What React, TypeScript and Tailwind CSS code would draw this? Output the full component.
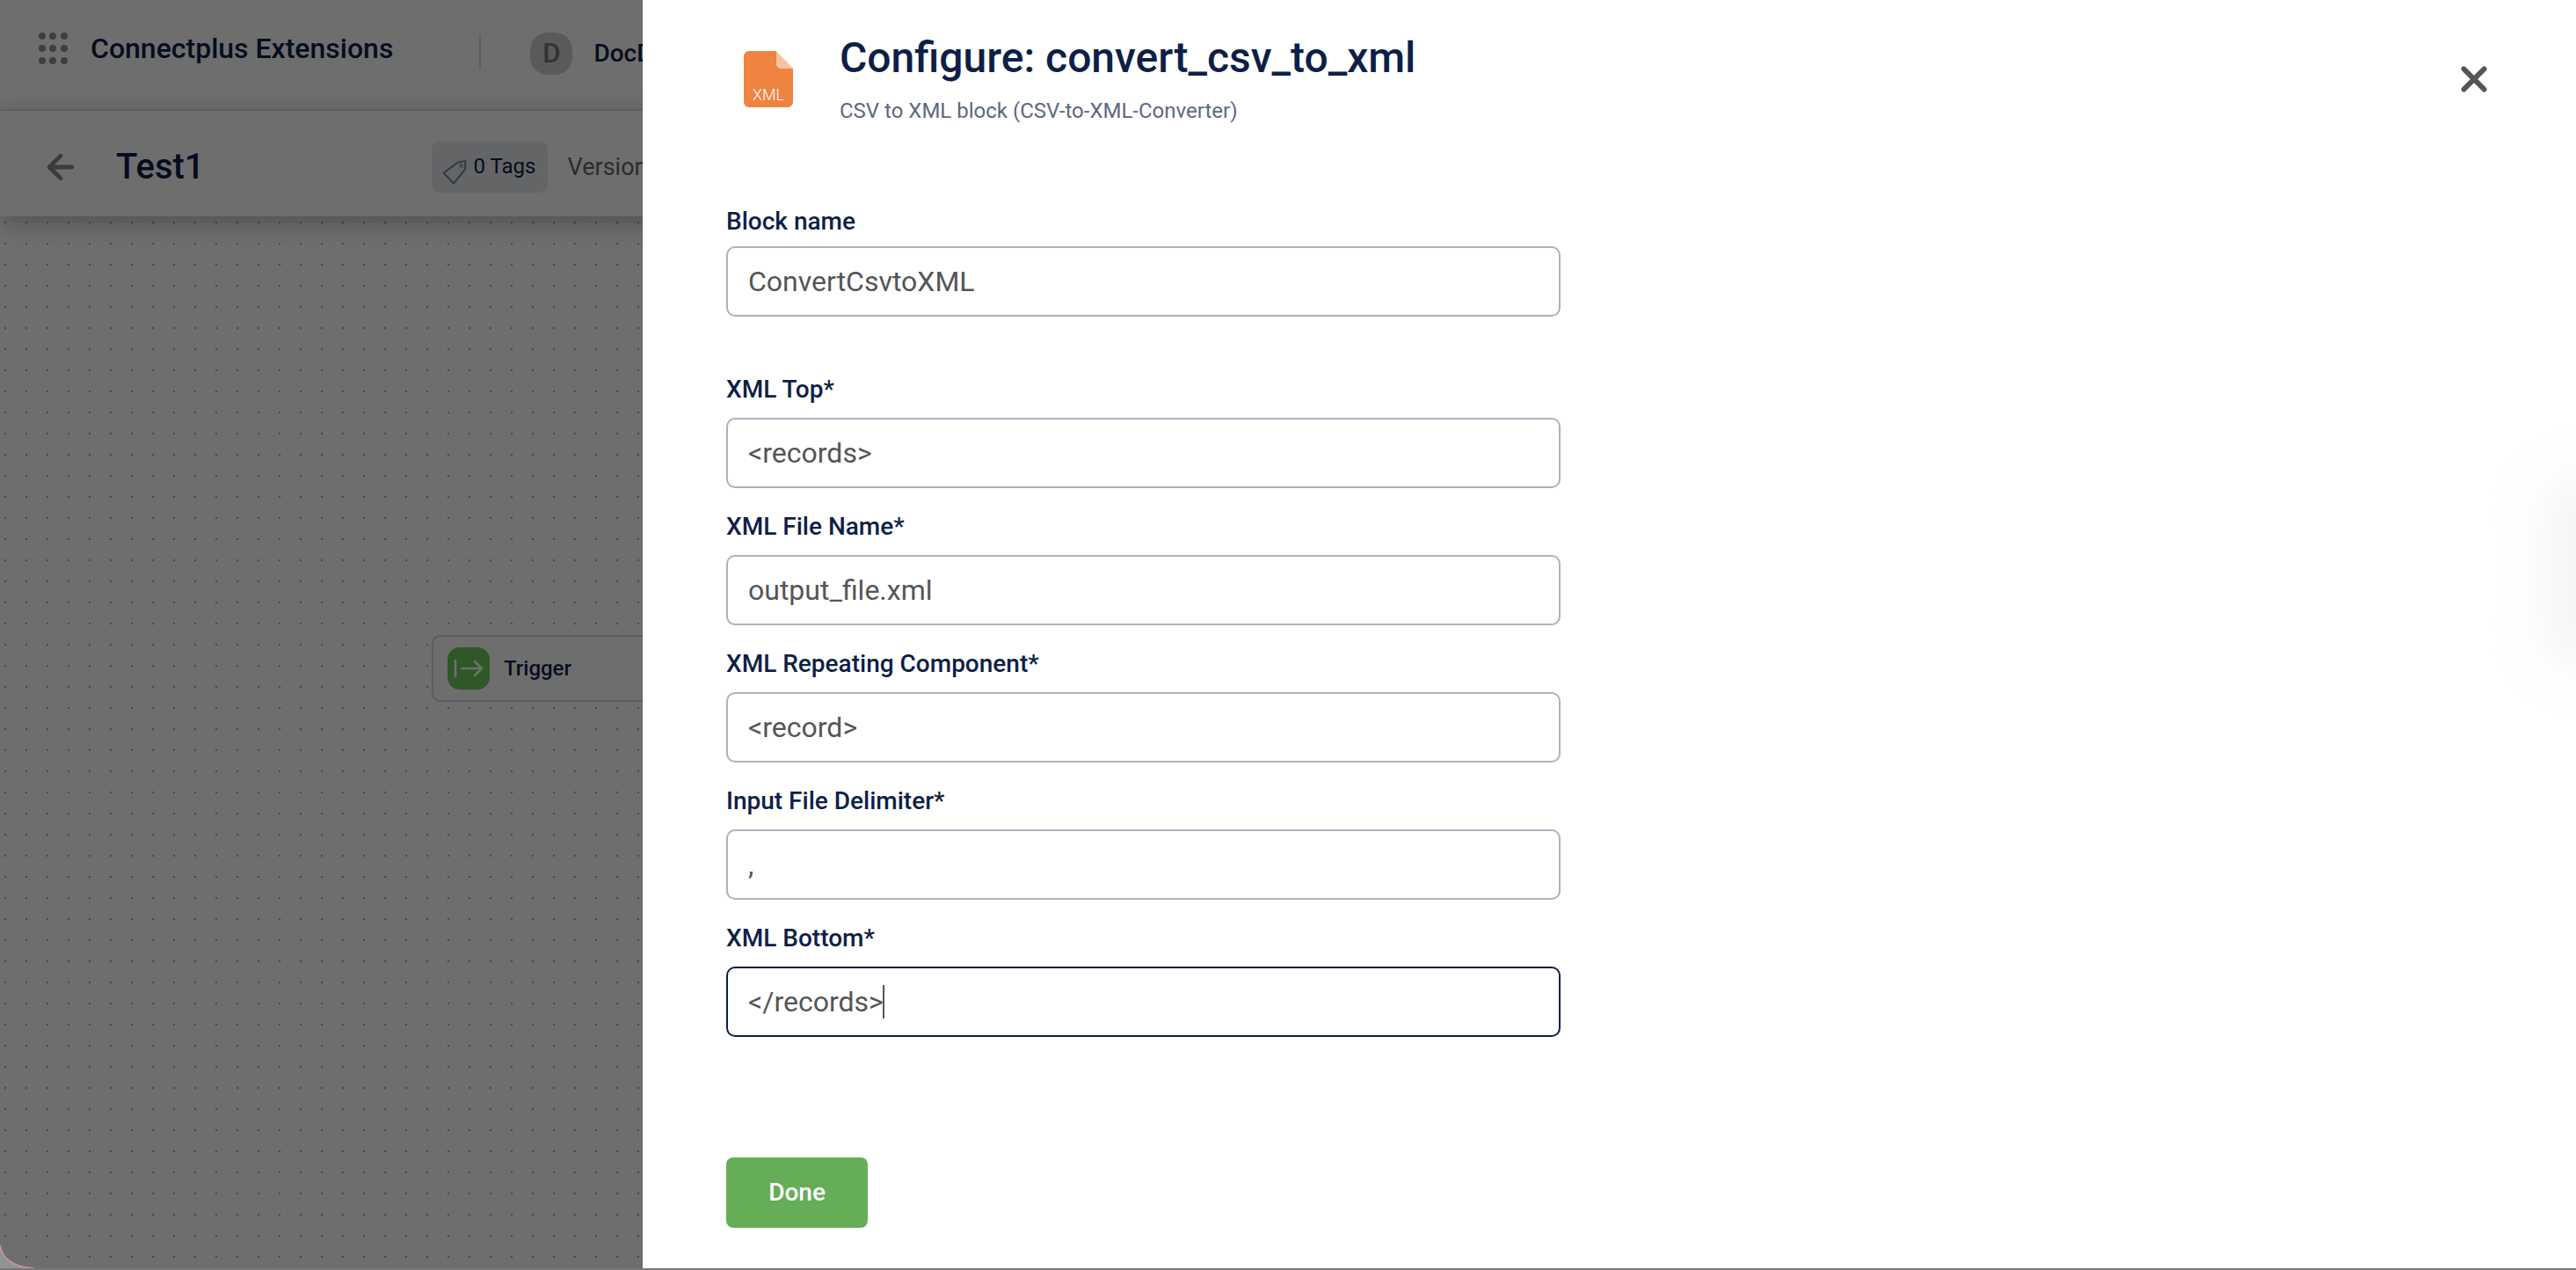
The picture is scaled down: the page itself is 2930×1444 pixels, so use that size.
import { ArrowLeft, X } from "lucide-react";

const FONT = "font-['Roboto',sans-serif]";

const FIELDS = [
  { label: "XML Top*", value: "<records>" },
  { label: "XML File Name*", value: "output_file.xml" },
  { label: "XML Repeating Component*", value: "<record>" },
  { label: "Input File Delimiter*", value: "," },
];

const LABEL = "h-[32px] text-[28px] leading-[32px] font-[550] text-[#0e1f47]";
const INPUT =
  "block h-[80px] w-[949px] rounded-[10px] border-2 bg-white px-[23px] text-[32px] text-[#555] outline-none";

function AppGrid() {
  return (
    <div className="grid h-[36px] w-[37px] grid-cols-3 content-between justify-between">
      {Array.from({ length: 9 }).map((_, i) => (
        <span key={i} className="h-[8px] w-[8px] rounded-full bg-[#8f8f8f]" />
      ))}
    </div>
  );
}

function TagIcon() {
  return (
    <svg width="28" height="28" viewBox="0 0 28 28" fill="none" className="mt-[11px]">
      <path
        d="M18 2.5 26.5 1 26 10.5 13 26.5 1.5 14.5Z"
        stroke="#7f8792"
        strokeWidth="2"
        strokeLinejoin="round"
      />
      <circle cx="21.5" cy="6.5" r="1.6" stroke="#7f8792" strokeWidth="1.3" />
    </svg>
  );
}

function XmlFileIcon() {
  return (
    <svg width="56" height="64" viewBox="0 0 56 64" className="ml-[20px] mt-[58px] shrink-0">
      <path
        d="M6 0H37V14a6 6 0 0 0 6 6H56V58a6 6 0 0 1-6 6H6a6 6 0 0 1-6-6V6a6 6 0 0 1 6-6Z"
        fill="#ee843f"
      />
      <path d="M37 0 56 20H43a6 6 0 0 1-6-6Z" fill="#f7c3a0" />
      <text x="28" y="56" textAnchor="middle" fontSize="18" fontWeight="300" fill="#fff" fontFamily="Roboto, sans-serif">
        XML
      </text>
    </svg>
  );
}

function Field({ label, value }: { label: string; value: string }) {
  return (
    <div className="mb-[28px]">
      <div className={`mb-[16px] ${LABEL}`}>{label}</div>
      <input readOnly value={value} className={`${INPUT} border-[#adb1bf]`} />
    </div>
  );
}

function BackgroundPage() {
  return (
    <div className="flex h-full flex-col bg-white">
      <header className="flex h-[126px] shrink-0 items-start border-b-2 border-[#ededed] pl-[44px] pt-[37px]">
        <AppGrid />
        <span className="ml-[22px] text-[32px] leading-[36px] font-medium text-[#0e1f47]">Connectplus Extensions</span>
        <span className="ml-[98px] mt-[2px] h-[40px] w-[2px] bg-[#d9d9d9]" />
        <span className="ml-[56px] flex h-[48px] w-[48px] items-center justify-center rounded-[20px] bg-[#d1d1d1] text-[31px] font-medium text-[#777]">
          D
        </span>
        <span className="ml-[24px] mt-[6px] text-[28px] leading-[36px] font-medium text-[#0e1f47]">DocD</span>
      </header>
      <div className="relative z-10 flex h-[120px] shrink-0 items-center bg-white pl-[47px] pt-[8px] shadow-[0_6px_28px_rgba(0,0,0,0.3)]">
        <ArrowLeft size={44} strokeWidth={2.6} className="text-[#8a8a8a]" />
        <span className="ml-[41px] text-[40px] leading-[48px] font-medium text-[#0e1f47]">Test1</span>
        <div className="ml-[258px] flex h-[58px] w-[132px] items-start rounded-[8px] bg-[#e8eaed] pl-[12px] pt-[10px]">
          <TagIcon />
          <span className="ml-[8px] text-[24px] leading-[36px] text-[#0e1f47]">0 Tags</span>
        </div>
        <span className="ml-[23px] text-[27px] text-[#666]">Version</span>
      </div>
      <div className="relative flex-1 bg-white bg-[radial-gradient(circle,#a8a8a8_1.2px,transparent_1.2px)] bg-[length:24px_24px] bg-[position:-6px_-5px]">
        <div className="absolute left-[491px] top-[476px] flex h-[76px] w-[400px] items-center rounded-[10px] border-2 border-[#d2d3dc] bg-white pl-[16px]">
          <span className="flex h-[48px] w-[48px] items-center justify-center rounded-[14px] bg-[#6dc95a]">
            <svg width="34" height="22" viewBox="0 0 34 22" fill="none" stroke="#fff" strokeWidth="2.6" strokeLinecap="round" strokeLinejoin="round">
              <path d="M2 2v18M9 11h23M24 3l8 8-8 8" />
            </svg>
          </span>
          <span className="ml-[16px] text-[24px] font-medium text-[#0e1f47]">Trigger</span>
        </div>
      </div>
    </div>
  );
}

export default function App() {
  return (
    <div className={`relative h-[1444px] w-[2930px] overflow-hidden ${FONT}`}>
      <BackgroundPage />
      <div className="absolute inset-0 z-20 bg-black/[.57]" />

      <aside className="absolute bottom-0 right-0 top-0 z-30 w-[2199px] overflow-hidden bg-white pl-[95px]">
        <div className="absolute right-[-60px] top-[540px] h-[220px] w-[100px] rounded-full bg-[#f6f6f6] blur-[24px]" />
        <button className="absolute right-[100px] top-[74px] text-[#555]">
          <X size={32} strokeWidth={3} className="scale-[1.45]" />
        </button>

        <div className="flex h-[236px] items-start">
          <XmlFileIcon />
          <div className="ml-[53px] pt-[38px]">
            <h1 className="text-[48px] leading-[56px] font-[550] text-[#0e1f47]">Configure: convert_csv_to_xml</h1>
            <p className="mt-[16px] text-[24px] leading-[32px] text-[#5d6880]">CSV to XML block (CSV-to-XML-Converter)</p>
          </div>
        </div>

        <div className={`mb-[12px] ${LABEL}`}>Block name</div>
        <input readOnly value="ConvertCsvtoXML" className={`${INPUT} border-[#adb1bf]`} />

        <div className="mt-[67px]">
          {FIELDS.map((f) => (
            <Field key={f.label} label={f.label} value={f.value} />
          ))}
          <div>
            <div className={`mb-[16px] ${LABEL}`}>XML Bottom*</div>
            <div className="relative">
              <input readOnly value="</records>" className={`${INPUT} border-[#0e1f47]`} />
              <span className="absolute left-[178px] top-[21px] h-[38px] w-[2px] bg-[#555]" />
            </div>
          </div>
        </div>

        <button className="mt-[137px] block h-[80px] w-[161px] rounded-[8px] bg-[#66ad58] text-[28px] font-medium text-white">
          Done
        </button>
      </aside>

      {/* window corner of the captured screen */}
      <svg width="40" height="28" viewBox="0 0 40 28" className="absolute bottom-0 left-0 z-40">
        <path d="M0 0C2 14 14 25 38 26H0Z" fill="#8f9490" />
        <path d="M0 0C2 14 14 25 38 26" fill="none" stroke="#c48fab" strokeWidth="2" />
      </svg>
      <div className="absolute bottom-0 left-0 right-0 z-40 h-[2px] bg-[#777]" />
    </div>
  );
}
